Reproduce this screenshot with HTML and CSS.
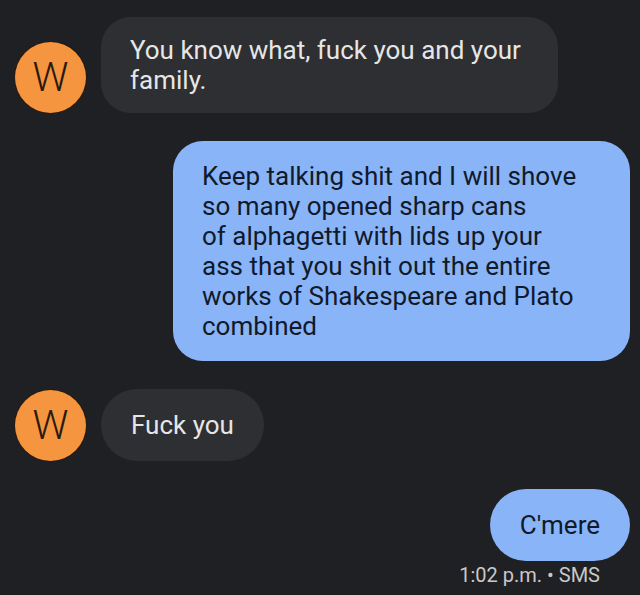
FILE: index.html
```html
<!DOCTYPE html>
<html lang="en">
<head>
<meta charset="utf-8">
<title>Messages</title>
<link rel="stylesheet" href="styles.css">
</head>
<body>
<main class="thread">
  <div class="row in">
    <div class="avatar">W</div>
    <div class="bubble incoming wide">You know what, fuck you and your<br>family.</div>
  </div>
  <div class="row out">
    <div class="bubble outgoing wide tall">Keep talking shit and I will shove<br>so many opened sharp cans<br>of alphagetti with lids up your<br>ass that you shit out the entire<br>works of Shakespeare and Plato<br>combined</div>
  </div>
  <div class="row in">
    <div class="avatar">W</div>
    <div class="bubble incoming single">Fuck you</div>
  </div>
  <div class="group out">
    <div class="bubble outgoing single">C'mere</div>
    <div class="meta">1:02 p.m. • SMS</div>
  </div>
</main>
</body>
</html>
```

FILE: styles.css
```css
html, body {
  margin: 0;
  padding: 0;
  background: #1f2023;
  height: 100%;
}

body {
  font-family: Roboto, "Noto Sans", "Liberation Sans", sans-serif;
}

.thread {
  display: flex;
  flex-direction: column;
  gap: 28px;
  padding: 17px 10px 0 15px;
}

.row {
  display: flex;
}

.row.in {
  align-items: flex-end;
  gap: 15px;
}

.row.out {
  justify-content: flex-end;
}

.group.out {
  display: flex;
  flex-direction: column;
  align-items: flex-end;
  gap: 3px;
}

.avatar {
  width: 71px;
  height: 71px;
  border-radius: 50%;
  background: #f6953f;
  color: #2a1a10;
  font-size: 40px;
  font-weight: 300;
  display: flex;
  align-items: center;
  justify-content: center;
  flex: none;
  box-shadow: 0 0 0 1px #2a1a10;
}

.bubble {
  font-size: 26px;
  line-height: 30px;
  padding: 18px 29px;
  border-radius: 30px;
  box-sizing: border-box;
}

.bubble.tall {
  padding: 20px 29px;
}

.bubble.wide {
  width: 457px;
}

.bubble.incoming {
  background: #2e2f32;
  color: #e6e6e6;
}

.bubble.outgoing {
  background: #8ab4f8;
  color: #101a2a;
}

.bubble.single {
  height: 72px;
  padding: 0 30px;
  border-radius: 36px;
  display: flex;
  align-items: center;
}

.meta {
  font-size: 20px;
  line-height: 22px;
  color: #c9c9c9;
  padding-right: 30px;
}
```
